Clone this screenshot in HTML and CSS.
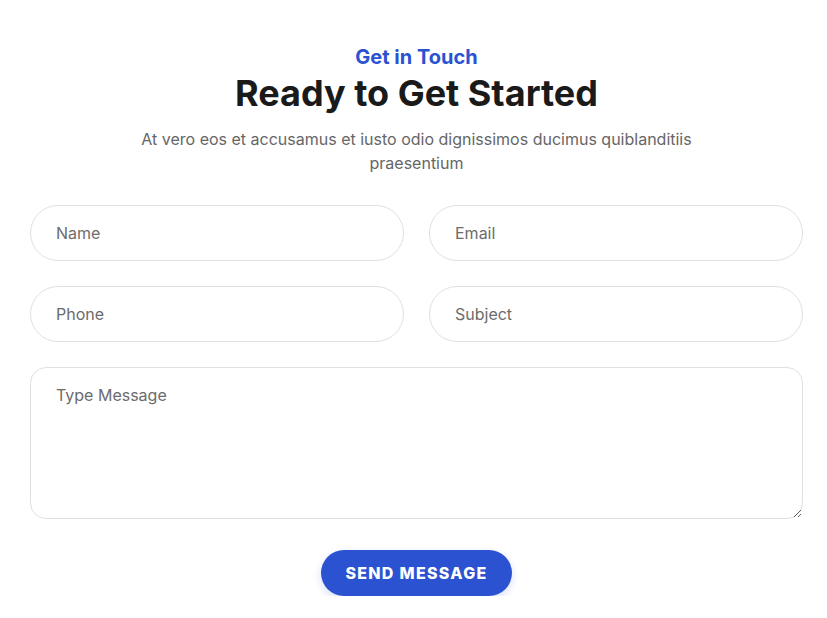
FILE: index.html
```html
<!DOCTYPE html>
<html lang="en">
<head>
<meta charset="utf-8">
<title>Contact</title>
<link rel="stylesheet" href="styles.css">
</head>
<body>
<section class="contact">
  <div class="intro">
    <p class="eyebrow">Get in Touch</p>
    <h1 class="title">Ready to Get Started</h1>
    <p class="lead">At vero eos et accusamus et iusto odio dignissimos ducimus quiblanditiis praesentium</p>
  </div>
  <form class="form">
    <div class="grid">
      <input class="field" type="text" placeholder="Name">
      <input class="field" type="email" placeholder="Email">
      <input class="field" type="tel" placeholder="Phone">
      <input class="field" type="text" placeholder="Subject">
    </div>
    <textarea class="message" placeholder="Type Message"></textarea>
    <div class="actions">
      <button class="send" type="button">SEND MESSAGE</button>
    </div>
  </form>
</section>
</body>
</html>
```

FILE: styles.css
```css
* { box-sizing: border-box; }
html, body { margin: 0; padding: 0; background: #fff; }
body { font-family: Inter, "Noto Sans", sans-serif; color: #666; }

.contact {
  padding: 44px 24px 0 30px;
}
.intro {
  text-align: center;
  display: flex;
  flex-direction: column;
  align-items: center;
}
.eyebrow {
  margin: 0;
  color: #2a52d1;
  font-size: 20px;
  font-weight: 700;
  line-height: 26px;
}
.title {
  margin: 0;
  color: #1a1a1a;
  font-size: 36px;
  font-weight: 700;
  line-height: 46px;
  letter-spacing: 0;
}
.lead {
  margin: 11px 0 0;
  max-width: 570px;
  font-size: 16px;
  line-height: 24px;
  color: #666;
}
.form {
  margin-top: 30px;
  display: flex;
  flex-direction: column;
}
.grid {
  display: grid;
  grid-template-columns: 1fr 1fr;
  column-gap: 25px;
  row-gap: 25px;
}
.field, .message {
  font-family: Inter, "Noto Sans", sans-serif;
  font-size: 16px;
  color: #333;
  background: #fff;
  border: 1px solid #e0e0e0;
  outline: none;
}
.field {
  height: 56px;
  border-radius: 28px;
  padding: 0 25px;
}
.message {
  margin-top: 25px;
  height: 152px;
  border-radius: 16px;
  padding: 17px 25px;
  resize: vertical;
}
.field::placeholder, .message::placeholder { color: #6c6c6c; opacity: 1; }
.actions {
  display: flex;
  justify-content: center;
  margin-top: 31px;
}
.send {
  width: 191px;
  height: 46px;
  border: none;
  border-radius: 23px;
  background: #2a52d1;
  color: #fff;
  font-family: Inter, "Noto Sans", sans-serif;
  font-size: 16px;
  font-weight: 800;
  letter-spacing: 1.3px;
  box-shadow: 0 3px 8px rgba(42, 82, 209, 0.18);
}
```
